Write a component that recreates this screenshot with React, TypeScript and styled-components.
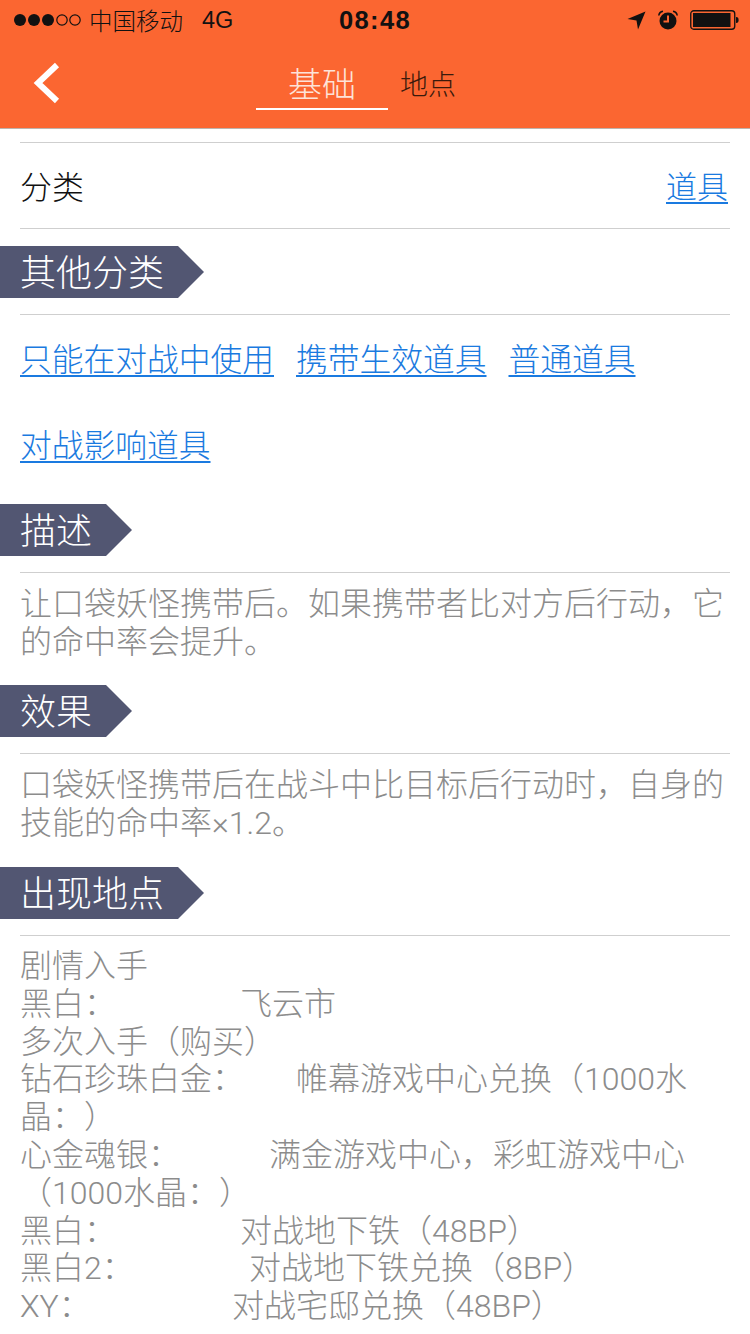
import React from 'react';
import styled, { createGlobalStyle } from 'styled-components';

const GlobalStyle = createGlobalStyle`
  html, body {
    margin: 0;
    padding: 0;
    height: 1334px;
    overflow: hidden;
    background: #fff;
    font-family: "Liberation Sans", "Noto Sans CJK SC", sans-serif;
    font-weight: 300;
    text-spacing-trim: space-all;
  }
`;

const Page = styled.div`
  width: 750px;
  height: 1334px;
  overflow: hidden;
`;

const Header = styled.header`
  height: 128px;
  background: #fb6631;
  border-bottom: 1px solid #bdb3ad;
`;

const StatusBar = styled.div`
  height: 40px;
  display: grid;
  grid-template-columns: 1fr auto 1fr;
  align-items: center;
  color: #111;
`;

const StatusLeft = styled.div`
  display: flex;
  align-items: center;
  padding-left: 13px;
  font-size: 23.5px;
  font-weight: 400;
`;

const Carrier = styled.span`
  margin-left: 8px;
  font-weight: 300;
`;

const Network = styled.span`
  margin-left: 19px;
`;

const Clock = styled.div`
  font-size: 25.5px;
  font-weight: 700;
  letter-spacing: 1.4px;
`;

const StatusRight = styled.div`
  display: flex;
  align-items: center;
  justify-content: flex-end;
  gap: 12px;
  padding-right: 11px;
`;

const NavBar = styled.nav`
  position: relative;
  height: 88px;
  display: flex;
  justify-content: center;
`;

const BackButton = styled.svg`
  position: absolute;
  left: 33px;
  top: 21px;
`;

const Tabs = styled.div`
  display: flex;
  align-items: flex-start;
  margin-right: 38px;
`;

const Tab = styled.div<{ $active?: boolean }>`
  box-sizing: border-box;
  width: ${(p) => (p.$active ? '132px' : 'auto')};
  height: 70px;
  padding-top: ${(p) => (p.$active ? '22px' : '27px')};
  margin-left: ${(p) => (p.$active ? '0' : '12px')};
  text-align: center;
  font-size: ${(p) => (p.$active ? '34px' : '28px')};
  line-height: ${(p) => (p.$active ? '46px' : '38px')};
  color: ${(p) => (p.$active ? '#fde3d8' : '#3a1a0c')};
  border-bottom: ${(p) => (p.$active ? '2px solid #fff' : 'none')};
`;

const Content = styled.main`
  padding-top: 13px;
`;

const Rule = styled.div`
  height: 1px;
  margin: 0 20px;
  background: #cfcfcf;
`;

const KindRow = styled.div`
  height: 85px;
  padding-bottom: 2px;
  box-sizing: border-box;
  margin: 0 22px 0 20px;
  display: flex;
  align-items: center;
  justify-content: space-between;
  font-size: 32px;
  color: #111;
`;

const Link = styled.a`
  color: #1a7ae0;
  font-size: 31.75px;
  text-decoration: underline;
  text-underline-offset: 4px;
  text-decoration-thickness: 2px;
`;

const KindLink = styled(Link)`
  font-size: 31px;
`;

const SectionTag = styled.div<{ $top: number }>`
  width: fit-content;
  height: 52px;
  margin-top: ${(p) => p.$top}px;
  margin-bottom: 16px;
  padding: 0 40px 0 20px;
  background: #525672;
  color: #fff;
  font-size: 36px;
  line-height: 56px;
  clip-path: polygon(0 0, calc(100% - 26px) 0, 100% 50%, calc(100% - 26px) 100%, 0 100%);
`;

const LinkList = styled.div`
  padding: 2px 20px 0;
  margin-bottom: -2px;
  display: flex;
  flex-wrap: wrap;
  column-gap: 22px;
  line-height: 86px;
`;

const Paragraph = styled.div`
  padding: 12px 20px 0;
  font-family: Roboto, "Noto Sans CJK SC", sans-serif;
  font-size: 32px;
  line-height: 38px;
  color: #8c8c8c;
`;

const PlaceLine = styled.div`
  line-height: 37.8px;
`;

const GameName = styled.span<{ $width: number }>`
  display: inline-block;
  width: ${(p) => p.$width}px;
`;

const places = [
  { title: '剧情入手' },
  { game: '黑白：', width: 220, text: '飞云市' },
  { title: '多次入手（购买）' },
  { game: '钻石珍珠白金：', width: 276, text: '帷幕游戏中心兑换（1000水' },
  { title: '晶：）' },
  { game: '心金魂银：', width: 249, text: '满金游戏中心，彩虹游戏中心' },
  { title: '（1000水晶：）' },
  { game: '黑白：', width: 220, text: '对战地下铁（48BP）' },
  { game: '黑白2：', width: 229, text: '对战地下铁兑换（8BP）' },
  { game: 'XY：', width: 212, text: '对战宅邸兑换（48BP）' },
];

function SignalDots() {
  return (
    <svg width="68" height="14" viewBox="0 0 68 14">
      {[7, 21, 35].map((x) => (
        <circle key={x} cx={x} cy="7" r="6" fill="#111" />
      ))}
      {[49, 62].map((x) => (
        <circle key={x} cx={x} cy="7" r="5.2" fill="none" stroke="#111" strokeWidth="1.2" />
      ))}
    </svg>
  );
}

function LocationIcon() {
  return (
    <svg width="19" height="19" viewBox="0 0 19 19">
      <path d="M0.5 8 L18.5 0.5 L11 18.5 L9.5 9.5 Z" fill="#111" />
    </svg>
  );
}

function AlarmIcon() {
  return (
    <svg width="20" height="20" viewBox="0 0 20 20">
      <circle cx="10" cy="11" r="8.5" fill="#111" />
      <path d="M10 5.5 V11.5 H5.5" fill="none" stroke="#fb6631" strokeWidth="2" />
      <path d="M0.8 5.5 A5 5 0 0 1 5 1.2 M19.2 5.5 A5 5 0 0 0 15 1.2" fill="none" stroke="#111" strokeWidth="1.6" />
    </svg>
  );
}

function BatteryIcon() {
  return (
    <svg width="49" height="20" viewBox="0 0 49 20">
      <rect x="0.75" y="0.75" width="44" height="18.5" rx="3" fill="none" stroke="#111" strokeWidth="1.3" />
      <rect x="3" y="3" width="37.5" height="14" fill="#111" />
      <path d="M46 7 C48 7 48.6 8 48.6 10 C48.6 12 48 13 46 13 Z" fill="#111" />
    </svg>
  );
}

export default function App() {
  return (
    <Page>
      <GlobalStyle />
      <Header>
        <StatusBar>
          <StatusLeft>
            <SignalDots />
            <Carrier>中国移动</Carrier>
            <Network>4G</Network>
          </StatusLeft>
          <Clock>08:48</Clock>
          <StatusRight>
            <LocationIcon />
            <AlarmIcon />
            <BatteryIcon />
          </StatusRight>
        </StatusBar>
        <NavBar>
          <BackButton width="28" height="44" viewBox="0 0 28 44">
            <path d="M24 4 L5 22 L24 40" fill="none" stroke="#fff" strokeWidth="6" />
          </BackButton>
          <Tabs>
            <Tab $active>基础</Tab>
            <Tab>地点</Tab>
          </Tabs>
        </NavBar>
      </Header>
      <Content>
        <Rule />
        <KindRow>
          <span>分类</span>
          <KindLink>道具</KindLink>
        </KindRow>
        <Rule />
        <SectionTag $top={17}>其他分类</SectionTag>
        <Rule />
        <LinkList>
          <Link>只能在对战中使用</Link>
          <Link>携带生效道具</Link>
          <Link>普通道具</Link>
          <Link>对战影响道具</Link>
        </LinkList>
        <SectionTag $top={17}>描述</SectionTag>
        <Rule />
        <Paragraph>
          让口袋妖怪携带后。如果携带者比对方后行动，它
          <br />
          的命中率会提升。
        </Paragraph>
        <SectionTag $top={24}>效果</SectionTag>
        <Rule />
        <Paragraph>
          口袋妖怪携带后在战斗中比目标后行动时，自身的
          <br />
          技能的命中率×1.2。
        </Paragraph>
        <SectionTag $top={25}>出现地点</SectionTag>
        <Rule />
        <Paragraph>
          {places.map((p, i) => (
            <PlaceLine key={i}>
              {p.game ? <GameName $width={p.width}>{p.game}</GameName> : null}
              {p.title ?? p.text}
            </PlaceLine>
          ))}
        </Paragraph>
      </Content>
    </Page>
  );
}
